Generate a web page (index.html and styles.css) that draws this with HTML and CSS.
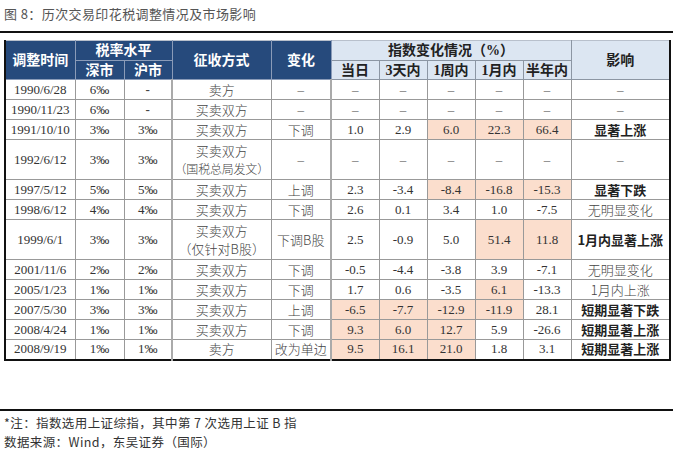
FILE: index.html
```html
<!DOCTYPE html>
<html lang="zh">
<head>
<meta charset="utf-8">
<link rel="stylesheet" href="styles.css">
</head>
<body>
<div class="title">图 8：历次交易印花税调整情况及市场影响</div>
<div class="wrap">
<table class="grid">
<colgroup>
<col style="width:70px"><col style="width:49px"><col style="width:48px"><col style="width:99px"><col style="width:60px">
<col style="width:48px"><col style="width:48px"><col style="width:48px"><col style="width:48px"><col style="width:48px"><col style="width:99px">
</colgroup>
<thead>
<tr class="h1">
<th class="dk" rowspan="2">调整时间</th>
<th class="dk" colspan="2">税率水平</th>
<th class="dk sep" rowspan="2">征收方式</th>
<th class="dk" rowspan="2">变化</th>
<th class="lt sepL" colspan="5">指数变化情况（%）</th>
<th class="lt" rowspan="2">影响</th>
</tr>
<tr class="h2">
<th class="dk">深市</th>
<th class="dk">沪市</th>
<th class="lt sepL">当日</th>
<th class="lt">3天内</th>
<th class="lt">1周内</th>
<th class="lt">1月内</th>
<th class="lt">半年内</th>
</tr>
</thead>
<tbody>
<tr><td>1990/6/28</td><td>6‰</td><td class="hy">-</td><td class="cn sep">卖方</td><td class="ds">–</td><td class="ds sepL">–</td><td class="ds">–</td><td class="ds">–</td><td class="ds">–</td><td class="ds">–</td><td class="ds">–</td></tr>
<tr><td>1990/11/23</td><td>6‰</td><td class="hy">-</td><td class="cn sep">买卖双方</td><td class="ds">–</td><td class="ds sepL">–</td><td class="ds">–</td><td class="ds">–</td><td class="ds">–</td><td class="ds">–</td><td class="ds">–</td></tr>
<tr><td>1991/10/10</td><td>3‰</td><td>3‰</td><td class="cn sep">买卖双方</td><td class="cn">下调</td><td class="sepL">1.0</td><td>2.9</td><td class="pk">6.0</td><td class="pk">22.3</td><td class="pk">66.4</td><td class="cn b">显著上涨</td></tr>
<tr class="tall"><td>1992/6/12</td><td>3‰</td><td>3‰</td><td class="cn sep">买卖双方<br><span class="sm">（国税总局发文）</span></td><td class="ds">–</td><td class="ds sepL">–</td><td class="ds">–</td><td class="ds">–</td><td class="ds">–</td><td class="ds">–</td><td class="ds">–</td></tr>
<tr><td>1997/5/12</td><td>5‰</td><td>5‰</td><td class="cn sep">买卖双方</td><td class="cn">上调</td><td class="sepL">2.3</td><td>-3.4</td><td class="pk">-8.4</td><td class="pk">-16.8</td><td class="pk">-15.3</td><td class="cn b">显著下跌</td></tr>
<tr><td>1998/6/12</td><td>4‰</td><td>4‰</td><td class="cn sep">买卖双方</td><td class="cn">下调</td><td class="sepL">2.6</td><td>0.1</td><td>3.4</td><td>1.0</td><td>-7.5</td><td class="cn">无明显变化</td></tr>
<tr class="tall"><td>1999/6/1</td><td>3‰</td><td>3‰</td><td class="cn sep">买卖双方<br>（仅针对B股）</td><td class="cn">下调B股</td><td class="sepL">2.5</td><td>-0.9</td><td>5.0</td><td class="pk">51.4</td><td class="pk">11.8</td><td class="cn b">1月内显著上涨</td></tr>
<tr><td>2001/11/6</td><td>2‰</td><td>2‰</td><td class="cn sep">买卖双方</td><td class="cn">下调</td><td class="sepL">-0.5</td><td>-4.4</td><td>-3.8</td><td>3.9</td><td>-7.1</td><td class="cn">无明显变化</td></tr>
<tr><td>2005/1/23</td><td>1‰</td><td>1‰</td><td class="cn sep">买卖双方</td><td class="cn">下调</td><td class="sepL">1.7</td><td>0.6</td><td>-3.5</td><td class="pk">6.1</td><td>-13.3</td><td class="cn">1月内上涨</td></tr>
<tr><td>2007/5/30</td><td>3‰</td><td>3‰</td><td class="cn sep">买卖双方</td><td class="cn">上调</td><td class="pk sepL">-6.5</td><td class="pk">-7.7</td><td class="pk">-12.9</td><td class="pk">-11.9</td><td>28.1</td><td class="cn b">短期显著下跌</td></tr>
<tr><td>2008/4/24</td><td>1‰</td><td>1‰</td><td class="cn sep">买卖双方</td><td class="cn">下调</td><td class="pk sepL">9.3</td><td class="pk">6.0</td><td class="pk">12.7</td><td>5.9</td><td>-26.6</td><td class="cn b">短期显著上涨</td></tr>
<tr><td>2008/9/19</td><td>1‰</td><td>1‰</td><td class="cn sep">卖方</td><td class="cn">改为单边</td><td class="pk sepL">9.5</td><td class="pk">16.1</td><td class="pk">21.0</td><td>1.8</td><td>3.1</td><td class="cn b">短期显著上涨</td></tr>
</tbody>
</table>
</div>
<div class="foot">
<div class="note">*注：指数选用上证综指，其中第 7 次选用上证 B 指</div>
<div class="note">数据来源：Wind，东吴证券（国际）</div>
</div>
</body>
</html>
```

FILE: styles.css
```css
html, body {
  margin: 0;
  padding: 0;
  background: #ffffff;
}
body {
  width: 673px;
  height: 453px;
  overflow: hidden;
  font-family: "Noto Sans CJK SC", "Liberation Sans", sans-serif;
}
.title {
  height: 33px;
  padding: 4px 0 0 4px;
  box-sizing: border-box;
  border-bottom: 2px solid #111;
  font-size: 13px;
  line-height: 20px;
  color: #555;
  letter-spacing: 0.4px;
}
.wrap {
  padding: 7px 0 0 4px;
  height: 376px;
  box-sizing: border-box;
}
.grid {
  border-collapse: collapse;
  table-layout: fixed;
  width: 665px;
  font-family: "Liberation Serif", "Noto Sans CJK SC", serif;
  font-size: 13px;
  color: #333;
  border-left: 2px solid #111;
  border-right: 2px solid #111;
  border-bottom: 2px solid #111;
}
.grid th, .grid td {
  padding: 0;
  text-align: center;
  vertical-align: middle;
  white-space: nowrap;
  overflow: hidden;
}
.grid td {
  border: 1px solid #999;
  line-height: 18px;
}
.grid tr.h1 { height: 20px; }
.grid tr.h2 { height: 19px; }
.grid tbody tr { height: 20px; }
.grid tbody tr.tall { height: 40px; }
.grid th {
  font-weight: bold;
  font-size: 14px;
  line-height: 17px;
}
.grid th.dk {
  background: #264a7c;
  color: #ffffff;
  border: 1px solid #8a9bb8;
}
.grid th.lt {
  background: #dce6f2;
  color: #222;
  border: 1px solid #8c96a3;
}
.grid thead tr.h1 th { border-top: 1px solid #b8c0cc; }
.grid td.cn {
  font-family: "Noto Sans CJK SC", sans-serif;
  font-size: 13px;
  font-weight: 300;
  color: #444;
}
.grid td.cn .sm {
  font-size: 12px;
  letter-spacing: -0.2px;
}
.grid td.b {
  font-weight: bold;
  color: #222;
}
.grid td.ds { color: #666; }
.grid td.hy { font-weight: bold; color: #444; }
.grid td.pk { background: #fbdecd; }
.grid .sep { border-left: 2px solid #aaa; }
.grid .sepL { border-left: 2px solid #aaa; }
.foot {
  border-top: 2px solid #111;
  padding: 2px 0 0 4px;
}
.note {
  font-size: 12.5px;
  line-height: 19px;
  color: #333;
  letter-spacing: 0.4px;
}
```
